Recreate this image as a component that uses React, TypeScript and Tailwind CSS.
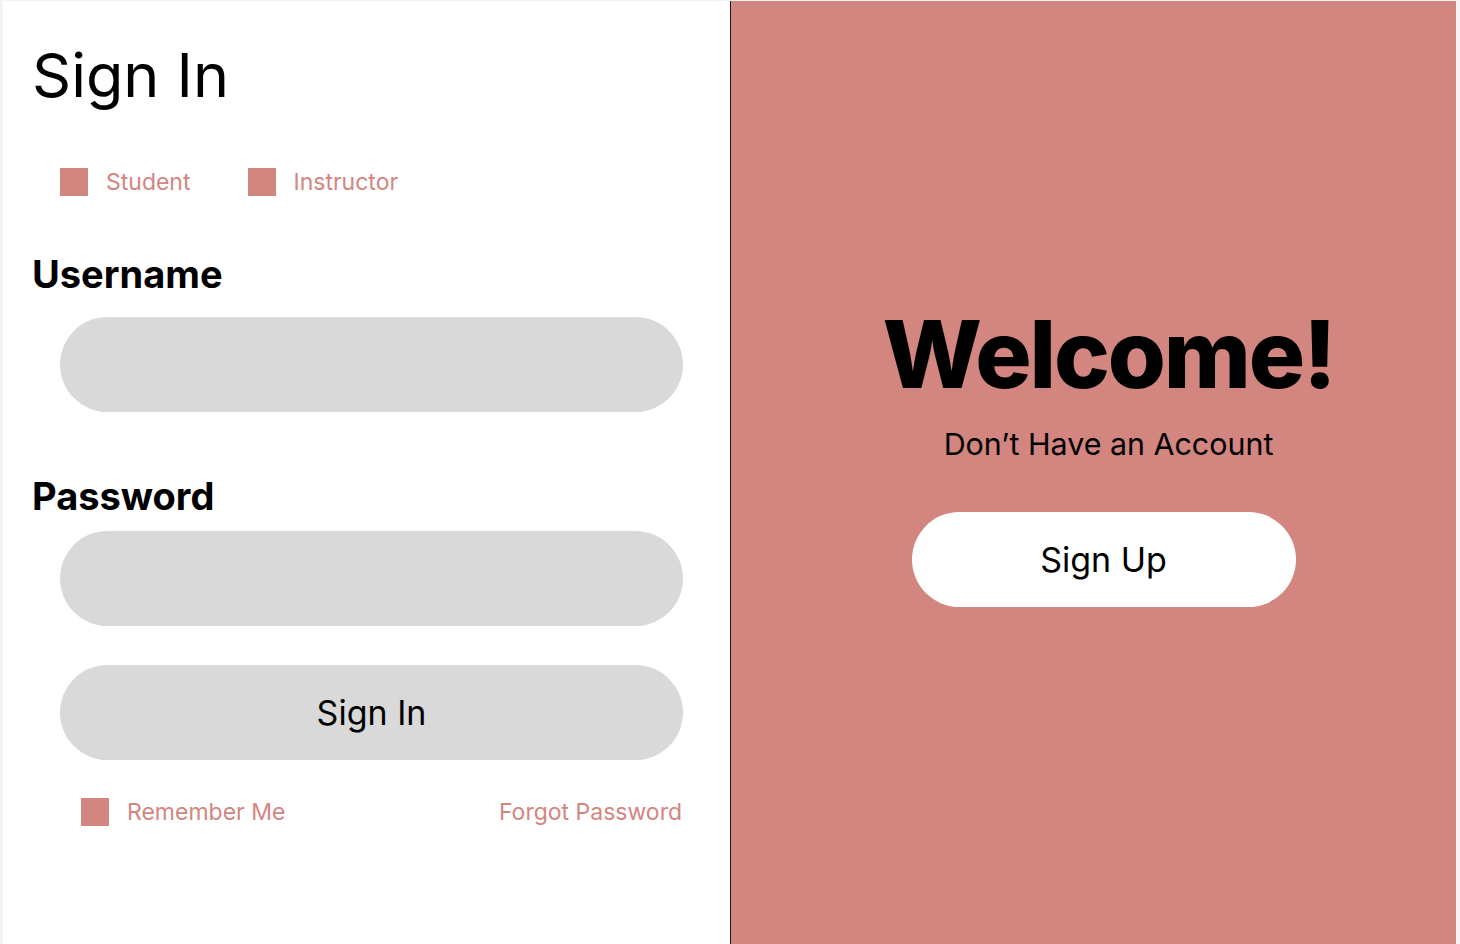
import React from 'react';

const PINK = 'bg-[#d38580]';

const Box: React.FC<{ className?: string }> = ({ className = '' }) => (
  <span className={`block w-[28px] h-[28px] ${PINK} ${className}`} />
);

const App: React.FC = () => {
  return (
    <div
      className="w-[1460px] h-[944px] flex bg-[#f4f2f2] pl-[3px] pt-px pr-[4px] overflow-hidden"
      style={{ fontFamily: 'Inter, "Noto Sans", sans-serif' }}
    >
      {/* Sign in form */}
      <div className="w-[728px] h-full bg-white border-r border-[#1e1e1e] flex flex-col pl-[29px]">
        <h1 className="mt-[42px] text-[61px] leading-[64px] font-normal text-black">Sign In</h1>

        <div className="flex items-center mt-[61px] pl-[28px] text-[23px] leading-[28px] text-[#d38580]">
          <label className="flex items-center gap-[18px]">
            <Box />
            <span>Student</span>
          </label>
          <label className="flex items-center gap-[18px] ml-[57px]">
            <Box />
            <span>Instructor</span>
          </label>
        </div>

        <h2 className="mt-[55px] text-[38px] leading-[46px] font-bold text-black">Username</h2>
        <div className="mt-[20px] ml-[28px] w-[623px] h-[95px] rounded-full bg-[#d9d9d9]" />

        <h2 className="mt-[61px] text-[38px] leading-[46px] font-bold text-black">Password</h2>
        <div className="mt-[12px] ml-[28px] w-[623px] h-[95px] rounded-full bg-[#d9d9d9]" />

        <button className="mt-[39px] ml-[28px] w-[623px] h-[95px] rounded-full bg-[#d9d9d9] text-[34px] text-black">
          Sign In
        </button>

        <div className="mt-[38px] ml-[49px] w-[601px] flex items-center justify-between text-[23px] leading-[28px] text-[#d38580]">
          <label className="flex items-center gap-[18px]">
            <Box />
            <span>Remember Me</span>
          </label>
          <span>Forgot Password</span>
        </div>
      </div>

      {/* Welcome panel */}
      <div className="flex-1 h-full bg-[#d38580] flex flex-col items-center pt-[303px] pl-[30px]">
        <h2 className="text-[94px] leading-[100px] font-extrabold text-black tracking-[-2.2px]">Welcome!</h2>
        <p className="mt-[20px] text-[30.4px] leading-[40px] text-black">Don’t Have an Account</p>
        <button className="mt-[48px] mr-[10px] w-[384px] h-[95px] rounded-full bg-white text-[34px] text-black">
          Sign Up
        </button>
      </div>
    </div>
  );
};

export default App;
